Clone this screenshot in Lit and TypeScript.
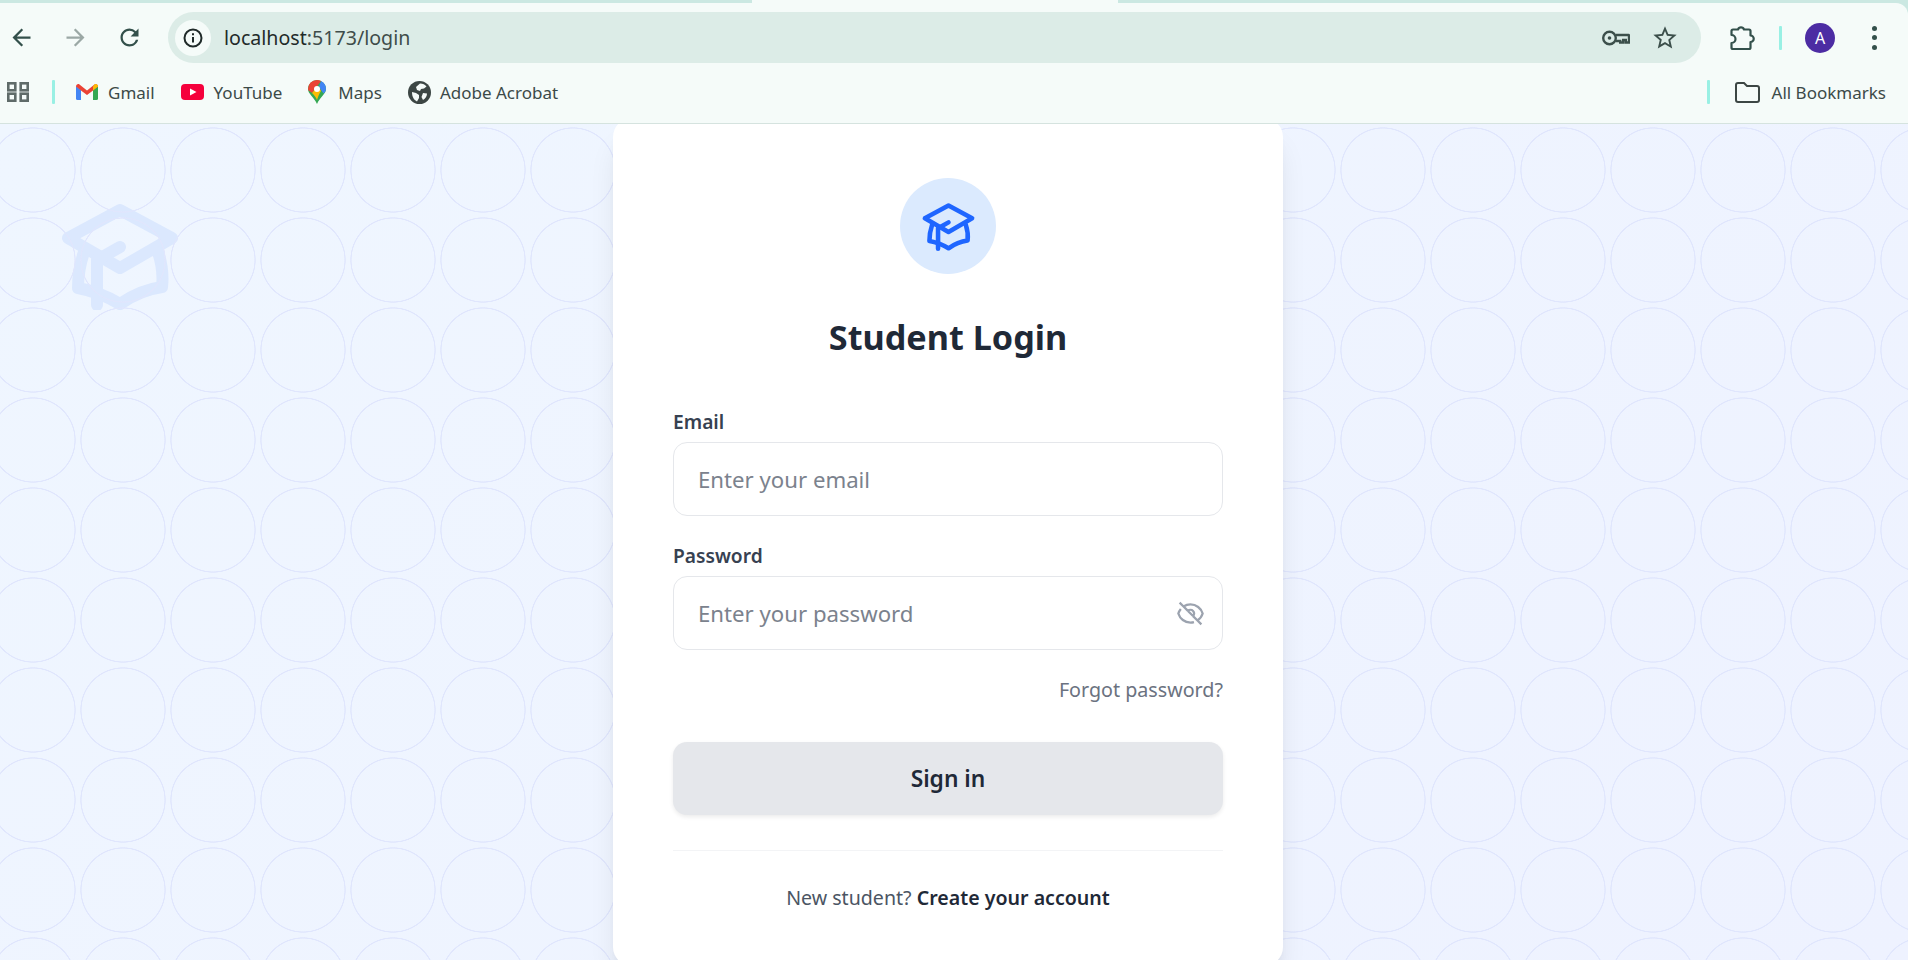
import { html, css, svg, LitElement } from 'lit';
import { customElement } from 'lit/decorators.js';

const capPaths = svg`
  <path d="M8 38 L60 10 L112 38 L60 68 Z" />
  <path d="M60 47 L37 60 V105" />
  <path d="M24 52 Q18 70 18 88 Q40 92 60 104 Q80 90 102 87 Q104 70 98 52" />
`;

@customElement('browser-bar')
export class BrowserBar extends LitElement {
  static styles = css`
    :host {
      display: block;
      background: #cbe8e2;
      font-family: 'Noto Sans', 'Open Sans', sans-serif;
      color: #3c4a48;
    }
    .strip {
      height: 3px;
      padding-left: 752px;
    }
    .active-tab {
      width: 366px;
      height: 3px;
      background: #f5fbf9;
    }
    .toolbar {
      background: #f5fbf9;
      border-top-right-radius: 12px;
      border-bottom: 1px solid #d5e3df;
      height: 121px;
      box-sizing: border-box;
    }
    .row {
      display: flex;
      align-items: center;
    }
    .top {
      padding: 9px 0 0 8px;
      height: 60px;
      box-sizing: border-box;
    }
    .nav {
      display: flex;
      gap: 27px;
      margin-right: 25px;
    }
    .nav svg {
      display: block;
      width: 27px;
      height: 27px;
      fill: #33504b;
    }
    .nav svg.off {
      fill: #9ba8a5;
    }
    .omnibox {
      width: 1533px;
      height: 51px;
      border-radius: 26px;
      background: #dcece7;
      display: flex;
      align-items: center;
      padding-left: 7px;
      box-sizing: border-box;
    }
    .info {
      width: 36px;
      height: 36px;
      border-radius: 50%;
      background: #f5fbf9;
      display: flex;
      align-items: center;
      justify-content: center;
      margin-right: 13px;
    }
    .url {
      font-size: 19.6px;
      color: #1f2a29;
      flex: 1;
    }
    .url span {
      color: #3f4c4a;
    }
    .key {
      margin-right: 21px;
    }
    .star {
      margin-right: 22px;
      fill: #3c4f4b;
    }
    .puzzle {
      margin-left: 28px;
    }
    .divider {
      width: 3px;
      height: 24px;
      border-radius: 1px;
      background: #99f0e4;
    }
    .top .divider {
      margin-left: 24px;
    }
    .avatar {
      width: 30px;
      height: 30px;
      margin-left: 23px;
      border-radius: 50%;
      background: #4c2ca3;
      color: #fff;
      font-size: 16px;
      display: flex;
      align-items: center;
      justify-content: center;
    }
    .dots {
      margin-left: 37px;
      width: 6px;
      display: flex;
      flex-direction: column;
      gap: 4.5px;
    }
    .dots i {
      width: 5px;
      height: 5px;
      border-radius: 50%;
      background: #33504b;
    }
    .bookmarks {
      margin-top: 5px;
      height: 48px;
      padding: 0 22px 0 7px;
      font-size: 17px;
    }
    .bookmarks > .divider {
      margin: 0 21px 0 23px;
    }
    .mark {
      display: flex;
      align-items: center;
      gap: 10px;
      margin-right: 26px;
    }
    .spacer {
      flex: 1;
    }
    .bookmarks > .divider.last {
      margin: 0 25px 0 0;
    }
    .all {
      gap: 12px;
      margin-right: 0;
    }
    svg {
      display: block;
      flex: none;
    }
  `;

  render() {
    return html`
      <div class="strip"><div class="active-tab"></div></div>
      <div class="toolbar">
        <div class="row top">
          <div class="nav">
            <svg viewBox="0 0 24 24"><path d="M20 11H7.83l5.59-5.59L12 4l-8 8 8 8 1.41-1.41L7.83 13H20v-2z" /></svg>
            <svg class="off" viewBox="0 0 24 24"><path d="M4 11h12.17l-5.59-5.59L12 4l8 8-8 8-1.41-1.41L16.17 13H4v-2z" /></svg>
            <svg viewBox="0 0 24 24"><path d="M17.65 6.35A7.958 7.958 0 0 0 12 4c-4.42 0-7.99 3.58-7.99 8s3.57 8 7.99 8c3.73 0 6.84-2.55 7.73-6h-2.08A5.99 5.99 0 0 1 12 18c-3.31 0-6-2.69-6-6s2.69-6 6-6c1.66 0 3.14.69 4.22 1.78L13 11h7V4l-2.35 2.35z" /></svg>
          </div>
          <div class="omnibox">
            <div class="info">
              <svg width="20" height="20" viewBox="0 0 20 20" fill="none" stroke="#1f2a29" stroke-width="2">
                <circle cx="10" cy="10" r="8.5" />
                <path d="M10 9v5.5M10 5.2v2" />
              </svg>
            </div>
            <div class="url">localhost<span>:5173/login</span></div>
            <svg class="key" width="28" height="16" viewBox="0 0 28 16" fill="none" stroke="#3c4f4b" stroke-width="2.4">
              <circle cx="7.500" cy="8" r="6.300" />
              <circle cx="7.500" cy="8" r="1.800" fill="#3c4f4b" stroke="none" />
              <path d="M13.800 5H26.500a.6.6 0 0 1 .5.5v7h-3.200V10h-2.600v2.500h-3V11H13.800" />
            </svg>
            <svg class="star" width="28" height="28" viewBox="0 0 24 24"><path d="M22 9.24l-7.19-.62L12 2 9.19 8.63 2 9.24l5.46 4.73L5.82 21 12 17.27 18.18 21l-1.63-7.03L22 9.24zM12 15.4l-3.76 2.27 1-4.28-3.32-2.88 4.38-.38L12 6.1l1.71 4.04 4.38.38-3.32 2.88 1 4.28L12 15.4z" /></svg>
          </div>
          <svg class="puzzle" width="26" height="26" viewBox="0 0 26 26" fill="none" stroke="#33504b" stroke-width="2.2" stroke-linejoin="round">
            <path d="M4 4.500H9a3.200 3.200 0 0 1 6 0H20a1.500 1.500 0 0 1 1.500 1.500V10.500a3.200 3.200 0 0 1 0 6.500V22.500a1.500 1.500 0 0 1-1.500 1.500H4a1.500 1.500 0 0 1-1.500-1.500V18a4 4 0 0 0 0-8V6A1.500 1.500 0 0 1 4 4.500Z" />
          </svg>
          <div class="divider"></div>
          <div class="avatar">A</div>
          <div class="dots"><i></i><i></i><i></i></div>
        </div>
        <div class="row bookmarks">
          <svg width="22" height="20" viewBox="0 0 22 20" fill="none" stroke="#5f6b69" stroke-width="2.6">
            <rect x="1.300" y="1.300" width="7" height="7" />
            <rect x="13.700" y="1.300" width="7" height="7" />
            <rect x="1.300" y="11.700" width="7" height="7" />
            <rect x="13.700" y="11.700" width="7" height="7" />
          </svg>
          <div class="divider"></div>
          <div class="mark">
            <svg width="22" height="16" viewBox="0 0 22 16">
              <path d="M0 2v12.500A1.500 1.500 0 0 0 1.500 16H5V6z" fill="#4285f4" />
              <path d="M22 2v12.500a1.500 1.500 0 0 1-1.500 1.500H17V6z" fill="#34a853" />
              <path d="M0 2.500C0 .5 2 -.5 3.500.5L11 6.500 18.500.5C20-.5 22 .5 22 2.500L17 6.500 11 11 5 6.500z" fill="#ea4335" />
              <path d="M17 2.400 18.500.5C20-.5 22 .5 22 2.500L17 6.500z" fill="#fbbc04" />
            </svg>
            <span>Gmail</span>
          </div>
          <div class="mark">
            <svg width="23" height="16" viewBox="0 0 23 16">
              <rect width="23" height="16" rx="4" fill="#f5003c" />
              <path d="M9 4.500 15.500 8 9 11.500z" fill="#fff" />
            </svg>
            <span>YouTube</span>
          </div>
          <div class="mark" style="gap:12px">
            <svg width="18" height="24" viewBox="0 0 18 24">
              <path d="M9 0a9 9 0 0 1 9 9c0 5-6 8-9 15-3-7-9-10-9-15a9 9 0 0 1 9-9z" fill="#34a853" />
              <path d="M2.600 2.600A9 9 0 0 1 9 0a9 9 0 0 1 4 1L4 13C2 11 0 11 0 9a9 9 0 0 1 2.600-6.400z" fill="#ea4335" />
              <path d="M13 1a9 9 0 0 1 5 8c0 2-1 3-2.500 4.500L11 7z" fill="#4285f4" />
              <path d="M4 13 7 9.500 11 7 13 11c-2 3-3 6-4 9-1-3-3-5-5-7z" fill="#fbbc04" />
              <circle cx="9" cy="9" r="3" fill="#fff" />
            </svg>
            <span>Maps</span>
          </div>
          <div class="mark" style="gap:9px">
            <svg width="23" height="23" viewBox="0 0 23 23">
              <circle cx="11.500" cy="11.500" r="11.500" fill="#3c4644" />
              <path d="M12 2.500c3 0 5 1 6.500 3L16 7.500l-3 .5-1 2-3-1-1-3zM4 11l4 1 3 2v3l-2 3.500C6 19 4 16 4 11zM15 12l4 .5c0 3-1.500 5-4 6.500l-1.500-3z" fill="#f5fbf9" />
            </svg>
            <span>Adobe Acrobat</span>
          </div>
          <div class="spacer"></div>
          <div class="divider last"></div>
          <div class="mark all">
            <svg width="25" height="21" viewBox="0 0 25 21" fill="none" stroke="#3c4644" stroke-width="2">
              <path d="M1 3a2 2 0 0 1 2-2h6l3 3h10a2 2 0 0 1 2 2v12a2 2 0 0 1-2 2H3a2 2 0 0 1-2-2z" />
            </svg>
            <span>All Bookmarks</span>
          </div>
        </div>
      </div>
    `;
  }
}

@customElement('login-card')
export class LoginCard extends LitElement {
  static styles = css`
    :host {
      display: block;
      position: relative;
      z-index: 2;
      flex: none;
      width: 670px;
      box-sizing: border-box;
      padding: 60px 60px 55px;
      background: #fff;
      border-radius: 19px;
      box-shadow: 0 24px 30px -6px rgba(0, 0, 0, 0.1), 0 10px 12px -7px rgba(0, 0, 0, 0.1);
      font-family: 'Noto Sans', 'Open Sans', sans-serif;
      color: #1f2937;
    }
    .badge {
      width: 96px;
      height: 96px;
      margin: 0 auto;
      border-radius: 50%;
      background: #dbeafe;
      display: flex;
      align-items: center;
      justify-content: center;
    }
    .badge svg {
      fill: none;
      stroke: #1f66ff;
      stroke-width: 10;
      stroke-linecap: round;
      stroke-linejoin: round;
      width: 55px;
      height: 50px;
    }
    h1 {
      margin: 39px 0 48px;
      font-size: 34.2px;
      line-height: 48px;
      font-weight: 700;
      text-align: center;
    }
    label {
      display: block;
      font-size: 19.2px;
      line-height: 26px;
      font-weight: 600;
      margin-bottom: 7px;
      color: #374151;
    }
    .field {
      position: relative;
      margin-bottom: 27px;
    }
    input {
      display: block;
      width: 100%;
      height: 74px;
      box-sizing: border-box;
      padding: 0 60px 0 24px;
      border: 1px solid #e5e7eb;
      border-radius: 14px;
      background: #fff;
      font: 22.2px 'Noto Sans', 'Open Sans', sans-serif;
      color: #1f2937;
    }
    input::placeholder {
      color: #7b828d;
      opacity: 1;
    }
    .eye {
      position: absolute;
      right: 18px;
      bottom: 22px;
      width: 29px;
      height: 29px;
      fill: none;
      stroke: #9ca3af;
      stroke-width: 1.9;
    }
    .forgot {
      margin-top: 4px;
      text-align: right;
      font-size: 19.7px;
      line-height: 26px;
      color: #6b7280;
    }
    button {
      display: block;
      width: 100%;
      height: 73px;
      margin-top: 39px;
      border: none;
      border-radius: 14px;
      background: #e5e7eb;
      box-shadow: 0 2px 4px rgba(0, 0, 0, 0.08);
      font: 600 22.8px 'Noto Sans', 'Open Sans', sans-serif;
      color: #1f2937;
    }
    .foot {
      margin-top: 35px;
      padding-top: 34px;
      border-top: 1px solid #f3f4f6;
      text-align: center;
      font-size: 19.6px;
      line-height: 26px;
      color: #4b5563;
    }
    .foot b {
      font-weight: 600;
      color: #1f2937;
    }
  `;

  render() {
    return html`
      <div class="badge">
        <svg viewBox="0 0 120 110">${capPaths}</svg>
      </div>
      <h1>Student Login</h1>
      <div class="field">
        <label for="email">Email</label>
        <input id="email" type="email" placeholder="Enter your email" />
      </div>
      <div class="field">
        <label for="password">Password</label>
        <input id="password" type="password" placeholder="Enter your password" />
        <svg class="eye" viewBox="0 0 24 24">
          <path d="M3.980 8.223A10.477 10.477 0 0 0 1.934 12C3.226 16.338 7.244 19.500 12 19.500c.993 0 1.953-.138 2.863-.395M6.228 6.228A10.451 10.451 0 0 1 12 4.500c4.756 0 8.773 3.162 10.065 7.498a10.522 10.522 0 0 1-4.293 5.774M6.228 6.228 3 3m3.228 3.228 3.650 3.650m7.894 7.894L21 21m-3.228-3.228-3.650-3.650m0 0a3 3 0 1 0-4.243-4.243m4.242 4.242L9.880 9.880" />
        </svg>
      </div>
      <div class="forgot">Forgot password?</div>
      <button>Sign in</button>
      <div class="foot">New student? <b>Create your account</b></div>
    `;
  }
}

@customElement('app-root')
export class AppRoot extends LitElement {
  static styles = css`
    :host {
      display: flex;
      flex-direction: column;
      height: 960px;
      overflow: hidden;
    }
    main {
      position: relative;
      flex: 1;
      min-height: 0;
      overflow: hidden;
      display: flex;
      align-items: center;
      justify-content: center;
      padding-right: 12px;
      background: linear-gradient(135deg, #eff6ff, #eef2ff);
    }
    .rings {
      position: absolute;
      inset: 0;
      z-index: 1;
      background-image: radial-gradient(
        circle,
        transparent 41.2px,
        #e0e6fd 41.7px,
        #e0e6fd 42.4px,
        transparent 42.9px
      );
      background-size: 90px 90px;
      background-position: -12px 1px;
    }
    .watermark {
      position: absolute;
      left: 60px;
      top: 76px;
      width: 120px;
      height: 110px;
      fill: none;
      stroke: #dbe8fe;
      stroke-width: 12;
      stroke-linecap: round;
      stroke-linejoin: round;
    }
  `;

  render() {
    return html`
      <browser-bar></browser-bar>
      <main>
        <svg class="watermark" viewBox="0 0 120 110">${capPaths}</svg>
        <div class="rings"></div>
        <login-card></login-card>
      </main>
    `;
  }
}
